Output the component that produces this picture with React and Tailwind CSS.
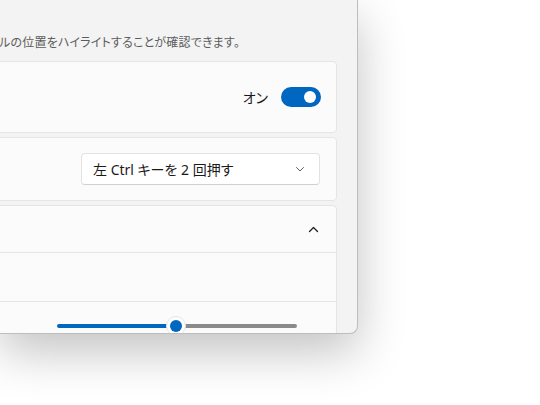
import React from 'react';

const font = { fontFamily: '"Noto Sans", "Noto Sans CJK JP", sans-serif' };

const Toggle = () => (
    <div className="w-[40px] h-[20px] rounded-full bg-[#0067c0] flex items-center justify-end pr-[5px]">
        <div className="w-[12px] h-[12px] rounded-full bg-white" />
    </div>
);

const ChevronDown = () => (
    <svg width="10" height="10" viewBox="0 0 10 10" fill="none">
        <path d="M1.5 3.5 L5 7 L8.5 3.5" stroke="#5f5f5f" strokeWidth="1" strokeLinecap="round" strokeLinejoin="round" />
    </svg>
);

const ChevronUp = () => (
    <svg width="11" height="11" viewBox="0 0 11 11" fill="none">
        <path d="M1.5 7.5 L5.5 3.5 L9.5 7.5" stroke="#1a1a1a" strokeWidth="1.2" strokeLinecap="round" strokeLinejoin="round" />
    </svg>
);

const Slider = () => (
    <div className="relative w-[240px] h-[20px] flex items-center">
        <div className="w-[119px] h-[4px] rounded-l-full bg-[#0067c0]" />
        <div className="w-[121px] h-[4px] rounded-r-full bg-[#8a8a8a]" />
        <div className="absolute left-[109px] top-0 w-[20px] h-[20px] rounded-full bg-white border border-[#e5e5e5] flex items-center justify-center">
            <div className="w-[12px] h-[12px] rounded-full bg-[#0067c0]" />
        </div>
    </div>
);

const App = () => {
    return (
        <div className="w-[540px] h-[405px] bg-white overflow-hidden [font-feature-settings:'palt']" style={font}>
            <div className="w-[358px] h-[334px] bg-[#f3f3f3] rounded-br-[8px] border-r border-b border-[#bdbdbd] shadow-[0_18px_48px_rgba(0,0,0,0.24)] overflow-hidden">
                <div className="ml-[-12px] mr-[20px] flex flex-col">
                    <div className="mt-[35px] h-[26px] flex justify-end pr-[97px]">
                        <span className="shrink-0 text-[12px] leading-[16px] tracking-[0.2px] text-[#5c5c5c] whitespace-nowrap">
                            カーソルの位置をハイライトすることが確認できます。
                        </span>
                    </div>

                    {/* toggle card */}
                    <div className="h-[72px] bg-[#fbfbfb] border border-[#e5e5e5] rounded-[4px] flex items-center justify-end pr-[15px] gap-[13px]">
                        <span className="text-[14px] text-[#1a1a1a]">オン</span>
                        <Toggle />
                    </div>

                    {/* dropdown card */}
                    <div className="mt-[4px] h-[64px] bg-[#fbfbfb] border border-[#e5e5e5] rounded-[4px] flex items-center justify-end pr-[16px]">
                        <div className="w-[239px] h-[32px] bg-white border border-[#e2e2e2] border-b-[#d0d0d0] rounded-[4px] flex items-center justify-between pl-[11px] pr-[14px]">
                            <span className="text-[14px] text-[#1a1a1a]">左 Ctrl キーを 2 回押す</span>
                            <ChevronDown />
                        </div>
                    </div>

                    {/* expander card */}
                    <div className="mt-[4px] h-[140px] bg-[#fbfbfb] border border-[#e5e5e5] rounded-t-[4px] flex flex-col">
                        <div className="h-[47px] flex items-center justify-end pr-[17px] border-b border-[#e5e5e5]">
                            <ChevronUp />
                        </div>
                        <div className="h-[49px] border-b border-[#e5e5e5]" />
                        <div className="pt-[14px] pl-[68px] flex">
                            <Slider />
                        </div>
                    </div>
                </div>
            </div>
        </div>
    );
};

export default App;
